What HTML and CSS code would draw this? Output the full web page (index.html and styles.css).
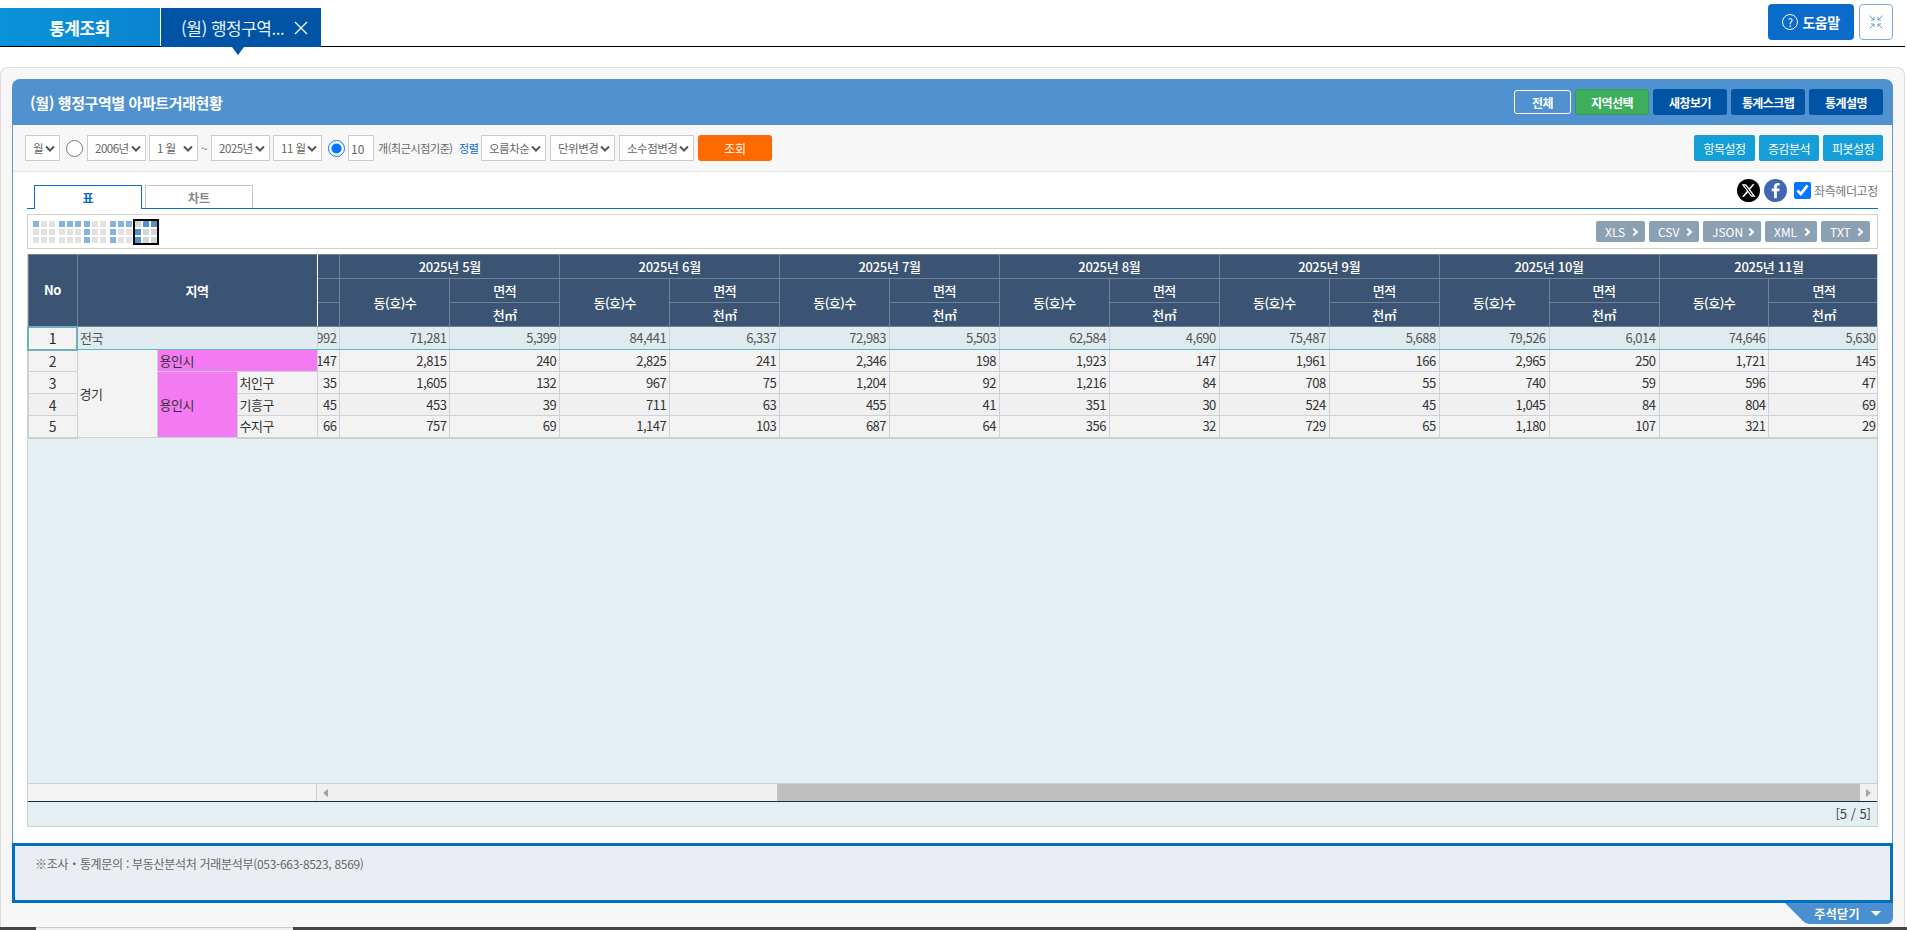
FILE: index.html
```html
<!DOCTYPE html>
<html lang="ko">
<head>
<meta charset="utf-8">
<title>통계조회</title>
<link rel="stylesheet" href="styles.css">
</head>
<body>
<header class="topbar">
  <nav class="toptabs">
    <a class="tab-main">통계조회</a>
    <a class="tab-open"><span>(월) 행정구역...</span>
      <svg class="tab-x" width="14" height="14" viewBox="0 0 14 14"><path d="M1 1L13 13M13 1L1 13" stroke="#fff" stroke-width="1.3" fill="none"/></svg>
    </a>
  </nav>
  <div class="topactions">
    <button class="help"><span class="help-q">?</span>도움말</button>
    <button class="shrink" aria-label="축소">
      <svg width="16" height="16" viewBox="0 0 16 16" fill="none" stroke="#5b93cf" stroke-width="0.9"><path d="M1.500 1.500L6 6M6 3V6H3M14.500 1.500L10 6M10 3V6H13M1.500 14.500L6 10M3 10H6V13M14.500 14.500L10 10M13 10H10V13"/></svg>
    </button>
  </div>
</header>

<main class="outer">
  <section class="panel">
    <div class="panel-head">
      <h1>(월) 행정구역별 아파트거래현황</h1>
      <div class="head-btns">
        <button class="hb hb-line">전체</button>
        <button class="hb hb-green">지역선택</button>
        <button class="hb hb-navy">새창보기</button>
        <button class="hb hb-navy">통계스크랩</button>
        <button class="hb hb-navy">통계설명</button>
      </div>
    </div>

    <div class="toolbar">
      <select class="w35"><option>월</option></select>
      <input type="radio" class="rd" name="p">
      <select class="w59"><option>2006년</option></select>
      <select class="w49"><option>1 월</option></select>
      <span class="tilde">~</span>
      <select class="w59"><option>2025년</option></select>
      <select class="w49"><option>11 월</option></select>
      <input type="radio" class="rd" name="p" checked>
      <input type="text" class="num" value="10">
      <span class="lbl">개(최근시점기준)</span>
      <span class="lbl-blue">정렬</span>
      <select class="w65"><option>오름차순</option></select>
      <select class="w65"><option>단위변경</option></select>
      <select class="w75"><option>소수점변경</option></select>
      <button class="search">조회</button>
      <div class="tool-right">
        <button class="tb tb-w61">항목설정</button>
        <button class="tb">증감분석</button>
        <button class="tb">피봇설정</button>
      </div>
    </div>

    <div class="content">
      <div class="viewtabs">
        <a class="vt vt-on">표</a>
        <a class="vt">차트</a>
        <div class="share">
          <svg class="sns" viewBox="0 0 24 24"><circle cx="12" cy="12" r="12" fill="#000"/><path fill="#fff" d="M16.2 5.5h2.2l-4.8 5.5 5.7 7.5h-4.4l-3.5-4.5-4 4.5H5.2l5.1-5.9-5.4-7.1h4.6l3.1 4.1zm-.8 11.7h1.2L8.8 6.8H7.5z"/></svg>
          <svg class="sns" viewBox="0 0 24 24"><circle cx="12" cy="12" r="12" fill="#4267b2"/><path fill="#fff" d="M13.4 20v-7.2h2.5l.4-2.9h-2.9V8.100c0-.8.3-1.400 1.500-1.400h1.500V4.200c-.3 0-1.200-.1-2.200-.1-2.200 0-3.700 1.300-3.700 3.800v2H8v2.900h2.500V20z"/></svg>
          <input type="checkbox" class="chk" checked>
          <span class="chk-lbl">좌측헤더고정</span>
        </div>
      </div>

      <div class="iconbar">
        <div class="presets">
          <div class="pv"><i class="b"></i><i></i><i></i><i></i><i></i><i></i><i></i><i></i><i></i></div>
          <div class="pv"><i class="b"></i><i class="b"></i><i class="b"></i><i></i><i></i><i></i><i></i><i></i><i></i></div>
          <div class="pv"><i class="b"></i><i></i><i></i><i class="b"></i><i></i><i></i><i class="b"></i><i></i><i></i></div>
          <div class="pv"><i class="b"></i><i class="b"></i><i class="b"></i><i class="b"></i><i></i><i></i><i class="b"></i><i></i><i></i></div>
          <div class="pv pv-on"><i></i><i class="b"></i><i class="b"></i><i class="b"></i><i></i><i></i><i class="b"></i><i></i><i></i></div>
        </div>
        <div class="exports">
          <button class="ex ex-xls">XLS</button>
          <button class="ex ex-csv">CSV</button>
          <button class="ex ex-json">JSON</button>
          <button class="ex ex-xml">XML</button>
          <button class="ex ex-txt">TXT</button>
        </div>
      </div>

      <div class="grid">
        <div class="grid-main">
          <table class="tbl tbl-left">
            <colgroup><col class="c-no"><col class="c-r"><col class="c-r"><col class="c-r"></colgroup>
            <thead>
              <tr><th class="h-no">No</th><th colspan="3" class="h-reg">지역</th></tr>
            </thead>
            <tbody>
              <tr class="total"><td class="no">1</td><td colspan="3" class="tx">전국</td></tr>
              <tr><td class="no">2</td><td rowspan="4" class="tx gg">경기</td><td colspan="2" class="tx pink">용인시</td></tr>
              <tr><td class="no">3</td><td rowspan="3" class="tx pink">용인시</td><td class="tx">처인구</td></tr>
              <tr class="alt"><td class="no">4</td><td class="tx">기흥구</td></tr>
              <tr class="last"><td class="no">5</td><td class="tx">수지구</td></tr>
            </tbody>
          </table>
          <div class="scrollpane">
            <table class="tbl tbl-right">
              <thead>
                <tr class="months"><th></th><th colspan="2">2025년 5월</th><th colspan="2">2025년 6월</th><th colspan="2">2025년 7월</th><th colspan="2">2025년 8월</th><th colspan="2">2025년 9월</th><th colspan="2">2025년 10월</th><th colspan="2">2025년 11월</th></tr>
                <tr><th></th><th rowspan="2">동(호)수</th><th>면적</th><th rowspan="2">동(호)수</th><th>면적</th><th rowspan="2">동(호)수</th><th>면적</th><th rowspan="2">동(호)수</th><th>면적</th><th rowspan="2">동(호)수</th><th>면적</th><th rowspan="2">동(호)수</th><th>면적</th><th rowspan="2">동(호)수</th><th>면적</th></tr>
                <tr><th></th><th>천㎡</th><th>천㎡</th><th>천㎡</th><th>천㎡</th><th>천㎡</th><th>천㎡</th><th>천㎡</th></tr>
              </thead>
              <tbody>
                <tr class="total"><td>5,992</td><td>71,281</td><td>5,399</td><td>84,441</td><td>6,337</td><td>72,983</td><td>5,503</td><td>62,584</td><td>4,690</td><td>75,487</td><td>5,688</td><td>79,526</td><td>6,014</td><td>74,646</td><td>5,630</td></tr>
                <tr><td>147</td><td>2,815</td><td>240</td><td>2,825</td><td>241</td><td>2,346</td><td>198</td><td>1,923</td><td>147</td><td>1,961</td><td>166</td><td>2,965</td><td>250</td><td>1,721</td><td>145</td></tr>
                <tr><td>35</td><td>1,605</td><td>132</td><td>967</td><td>75</td><td>1,204</td><td>92</td><td>1,216</td><td>84</td><td>708</td><td>55</td><td>740</td><td>59</td><td>596</td><td>47</td></tr>
                <tr class="alt"><td>45</td><td>453</td><td>39</td><td>711</td><td>63</td><td>455</td><td>41</td><td>351</td><td>30</td><td>524</td><td>45</td><td>1,045</td><td>84</td><td>804</td><td>69</td></tr>
                <tr class="last"><td>66</td><td>757</td><td>69</td><td>1,147</td><td>103</td><td>687</td><td>64</td><td>356</td><td>32</td><td>729</td><td>65</td><td>1,180</td><td>107</td><td>321</td><td>29</td></tr>
              </tbody>
            </table>
          </div>
        </div>
        <div class="grid-empty"></div>
        <div class="hscroll">
          <div class="hs-frozen"></div>
          <div class="hs-track">
            <span class="hs-arrow hs-l"></span>
            <span class="hs-gap"></span>
            <span class="hs-thumb"></span>
            <span class="hs-arrow hs-r"></span>
          </div>
        </div>
        <div class="grid-foot">[5 / 5]</div>
      </div>
    </div>

    <div class="note">※조사・통계문의 : 부동산분석처 거래분석부(053-663-8523, 8569)</div>
    <div class="note-foot"><button class="note-toggle">주석닫기<span class="caret"></span></button></div>
  </section>
</main>
<div class="bottombar"><div class="bottom-thumb"></div></div>
</body>
</html>
```

FILE: styles.css
```css
* { box-sizing: border-box; }
html, body { margin: 0; height: 930px; overflow: hidden; background: #fff; }
body { font-family: "Noto Sans CJK KR", "Noto Sans", sans-serif; font-size: 12px; color: #333; }
button { font-family: inherit; cursor: pointer; padding: 0; border: 0; }
select, input { font-family: inherit; margin: 0; }

/* top bar */
.topbar { width: 1905px; height: 47px; border-bottom: 1px solid #000; display: flex; justify-content: space-between; }
.toptabs { display: flex; padding-top: 8px; }
.tab-main { width: 161px; height: 38px; background: linear-gradient(90deg, #0a93d8, #0a84d0); color: #fff; font-size: 17px; font-weight: 700; letter-spacing: -0.5px; display: flex; align-items: center; justify-content: center; border-right: 1px solid #fff; padding-right: 1px; }
.tab-open { position: relative; width: 160px; height: 39px; background: #0054a6; color: #e8f0fa; font-size: 17px; letter-spacing: -0.5px; display: flex; align-items: center; padding-left: 20px; gap: 10px; }
.tab-open::after { content: ""; position: absolute; left: 71px; top: 39px; border: 6px solid transparent; border-top: 8px solid #0054a6; border-bottom: 0; }
.tab-x { flex: none; }
.topactions { display: flex; gap: 5px; padding: 4px 12px 0 0; }
.help { width: 86px; height: 36px; border-radius: 4px; background: #0a6bcb; color: #fff; font-size: 14px; font-weight: 700; letter-spacing: -0.5px; display: flex; align-items: center; justify-content: center; gap: 4px; }
.help-q { width: 16px; height: 16px; border: 1px solid #fff; border-radius: 50%; font-size: 11px; font-weight: 400; line-height: 14px; text-align: center; letter-spacing: 0; }
.shrink { width: 34px; height: 36px; border: 1px solid #7aa8d8; border-radius: 4px; background: #fff; display: flex; align-items: center; justify-content: center; }

/* outer frame */
.outer { margin-top: 20px; width: 1905px; height: 860px; background: #f7f7f7; border: 1px solid #ddd; border-bottom: 0; border-radius: 8px 8px 0 0; padding: 11px 11px 0 11px; }
.panel { width: 1881px; }
.panel-head { height: 46px; background: #4f92cf; border-radius: 8px 8px 0 0; display: flex; align-items: center; justify-content: space-between; padding: 0 10px 0 18px; }
.panel-head h1 { margin: 0; font-size: 15px; font-weight: 700; color: #fff; letter-spacing: -0.4px; }
.head-btns { display: flex; align-items: center; gap: 4px; }
.hb { width: 74px; height: 26px; border-radius: 3px; color: #fff; font-size: 12px; font-weight: 700; letter-spacing: -0.6px; }
.hb-line { width: 57px; height: 24px; background: #4f92cf; border: 1px solid #fff; }
.hb-green { background: #3fae5c; border: 1px solid #369a50; }
.hb-navy { background: #0054a6; }

/* filter toolbar */
.toolbar { height: 47px; background: #f7f7f7; border: 1px solid #5b9ad5; border-width: 0 1px; box-shadow: inset 0 -1px 0 #e6e6e6; display: flex; align-items: center; padding: 0 9px 1px 12px; }
.toolbar select { appearance: none; height: 26px; border: 1px solid #ccc; background: #fff url("data:image/svg+xml,%3Csvg xmlns='http://www.w3.org/2000/svg' width='10' height='7'%3E%3Cpath d='M1 1.500L5 5.500L9 1.500' fill='none' stroke='%23555' stroke-width='2'/%3E%3C/svg%3E") no-repeat right 4px center; color: #666; font-size: 11.5px; letter-spacing: -0.5px; padding: 0 0 0 7px; border-radius: 0; }
.w35 { width: 35px; }
.w49 { width: 49px; margin-left: 3px; }
.w59 { width: 59px; }
.w65 { width: 65px; margin-left: 4px; }
.w75 { width: 75px; margin-left: 4px; }
.rd { width: 17px; height: 17px; flex: none; margin: 0 4px 0 6px; }
.tilde { width: 13px; text-align: center; color: #666; font-size: 11px; }
.num { width: 26px; height: 26px; border: 1px solid #ccc; background: #fff; color: #666; font-size: 12px; padding: 0 0 0 2px; margin-left: -1px; border-radius: 0; }
.lbl { margin-left: 4px; color: #666; font-size: 11px; letter-spacing: -0.4px; width: 81px; white-space: nowrap; }
.lbl-blue { color: #0a6bcb; font-size: 11px; letter-spacing: -0.4px; width: 18px; white-space: nowrap; }
.search { width: 74px; height: 26px; margin-left: 4px; background: #ff6a00; color: #fff; border-radius: 3px; font-size: 12px; letter-spacing: -0.3px; }
.tool-right { margin-left: auto; display: flex; gap: 4px; }
.tb { width: 60px; height: 26px; background: #169ed8; color: #fff; border-radius: 2px; font-size: 12px; letter-spacing: -0.6px; }
.tb-w61 { width: 61px; }

/* content */
.content { height: 671px; background: #fff; border: 1px solid #5b9ad5; border-width: 0 1px; padding: 13px 14px 0 14px; }
.viewtabs { height: 24px; width: 1851px; border-bottom: 1px solid #0a6bcb; display: flex; align-items: flex-end; padding-left: 7px; gap: 3px; position: relative; }
.vt { width: 108px; height: 23px; border: 1px solid #c4c4c4; border-bottom: 0; color: #888; font-size: 12px; font-weight: 700; display: flex; align-items: center; justify-content: center; background: #fff; }
.vt-on { height: 24px; border-color: #0a6bcb; color: #0a6bcb; margin-bottom: -1px; }
.share { margin-left: auto; height: 23px; display: flex; align-items: center; align-self: flex-start; margin-top: -6px; }
.sns { width: 23px; height: 23px; margin-right: 4px; flex: none; }
.chk { width: 17px; height: 17px; margin: 0 3px 0 3px; }
.chk-lbl { color: #777; font-size: 12px; letter-spacing: -0.4px; white-space: nowrap; width: 64px; }

.iconbar { margin-top: 5px; width: 1851px; height: 35px; border: 1px solid #d0d0d0; display: flex; align-items: center; justify-content: space-between; padding: 0 7px 0 5px; }
.presets { display: flex; align-items: center; gap: 3.6px; }
.pv { display: grid; grid-template-columns: repeat(3, 6px); grid-auto-rows: 6px; gap: 2px; }
.pv i { background: #e2e2e2; }
.pv i.b { background: #86b3dd; }
.pv-on { outline: 2px solid #000; outline-offset: 0; }
.pv-on i { background: #d6d6d6; }
.pv-on i.b { background: #4f92cf; }
.exports { display: flex; gap: 4px; }
.ex { position: relative; height: 21px; background: #8ca0b3; color: #fff; border-radius: 2px; font-size: 12px; letter-spacing: 0; text-align: left; padding-left: 9px; }
.ex::after { content: ""; position: absolute; right: 8px; top: 8px; width: 4px; height: 4px; border: solid #fff; border-width: 2px 2px 0 0; transform: rotate(45deg); }
.ex-xls { width: 49px; }
.ex-csv { width: 50px; }
.ex-json { width: 58px; }
.ex-xml { width: 52px; }
.ex-txt { width: 49px; }

/* grid */
.grid { margin-top: 5px; width: 1851px; height: 573px; display: flex; flex-direction: column; background: #e4eff1; border: solid #ccd0d4; border-width: 0 1px 1px 1px; }
.grid-main { display: flex; align-items: flex-start; flex: none; margin-left: -1px; }
.tbl { border-collapse: collapse; table-layout: fixed; font-size: 13px; line-height: 16px; letter-spacing: -0.5px; }
.tbl-left { width: 289px; flex: none; }
.c-no { width: 49px; }
.c-r { width: 80px; }
.scrollpane { flex: 1; overflow: hidden; min-width: 0; }
.tbl-right { width: 1650px; margin-left: -88px; }
.tbl th { height: 24px; padding: 0; background: #3c5473; color: #fff; font-weight: 500; border: 1px solid #6f8197; text-align: center; white-space: nowrap; }
.months th { letter-spacing: -0.3px; }
.tbl-left th { height: 72px; font-weight: 700; }
.tbl-left th.h-reg { border-right: 1px solid #fff; }
.tbl thead { border-top: 1px solid #2b4059; }
.tbl td { height: 22px; padding: 0 3px; background: #f3f3f3; color: #333; border: 1px solid #d0d0d8; text-align: right; white-space: nowrap; overflow: hidden; }
.tbl tr.alt td { background: #f0f0f0; }
.tbl td.no { text-align: center; padding: 0; font-size: 14px; }
.tbl td.tx { text-align: left; padding: 0 2px; }
.tbl td.gg { background: #f3f3f3; }
.tbl td.pink { background: #f47af4; }
.tbl tr.total td { height: 23px; background: #e0ebf0; color: #555; border-top: 1px solid #5bb8c6; border-bottom: 1px solid #5bb8c6; }
.tbl tr.total td.no { background: #f3f3f3; color: #222; border: 2px solid #6fb0bd; }
.tbl tr.last td { border-bottom: 2px solid #ccd0d4; }
.grid-empty { flex: 1; }
.hscroll { display: flex; height: 19px; flex: none; border-top: 1px solid #ccd0d4; border-bottom: 1px solid #1c2a3a; }
.hs-frozen { width: 289px; background: #f3f3f3; border-right: 1px solid #d0d0d0; flex: none; }
.hs-track { flex: 1; display: flex; align-items: stretch; background: #f0f0f0; }
.hs-arrow { flex: 0 0 17px; position: relative; }
.hs-arrow::after { content: ""; position: absolute; top: 5px; left: 6px; border: 4px solid transparent; border-width: 4px 5px; }
.hs-l::after { border-right-color: #a3a3a3; border-left-width: 0; }
.hs-r::after { border-left-color: #a3a3a3; border-right-width: 0; }
.hs-gap { flex: 0 0 443px; }
.hs-thumb { flex: 1; background: #bfbfbf; }
.grid-foot { height: 24px; flex: none; text-align: right; padding: 0 6px 0 0; font-size: 13px; line-height: 24px; color: #444; letter-spacing: 0; }

/* note */
.note { height: 60px; background: #eaeef3; border: 3px solid #0070c0; padding: 8px 20px; color: #666; font-size: 12px; letter-spacing: -0.3px; line-height: 20px; }
.note-foot { display: flex; justify-content: flex-end; }
.note-toggle { width: 108px; height: 21px; background: #4a90d0; color: #fff; font-size: 12px; font-weight: 700; letter-spacing: 0.4px; clip-path: path("M0 0H108V15a6 6 0 0 1-6 6H24a8 8 0 0 1-6-3Z"); display: flex; align-items: center; justify-content: flex-end; padding-right: 12px; gap: 11px; }
.caret { border: 4px solid transparent; border-width: 5px 5px 0; border-top-color: #fff; }

.bottombar { height: 3px; background: #444; width: 1907px; }
.bottom-thumb { margin-left: 36px; width: 257px; height: 3px; background: #f0f0f0; border-top: 1px solid #ccc; }
```
